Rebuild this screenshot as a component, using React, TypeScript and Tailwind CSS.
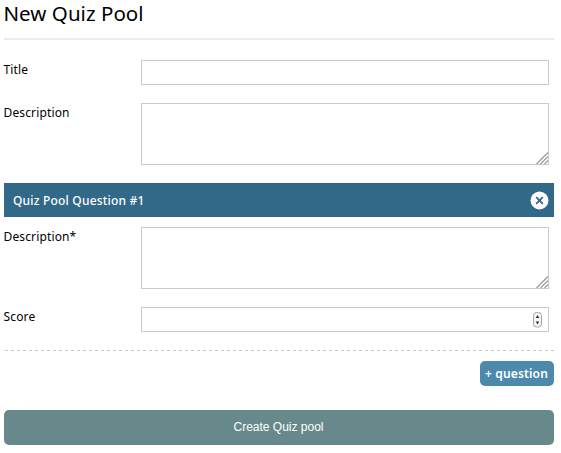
import type { ReactNode } from "react";

function ResizeGrip() {
  return (
    <svg className="pointer-events-none absolute right-px bottom-px" width="12" height="12" viewBox="0 0 12 12" fill="none" stroke="#a0a0a0" strokeWidth="1.4">
      <path d="M0.5 12 12 0.5M4.5 12 12 4.5M8.5 12 12 8.5" />
    </svg>
  );
}

function TextArea({ label }: { label: string }) {
  return (
    <div className="relative h-[62px] w-[408px]">
      <textarea aria-label={label} className="block h-full w-full resize-none border border-[#cacaca] bg-white outline-none" />
      <ResizeGrip />
    </div>
  );
}

function Stepper() {
  return (
    <svg className="absolute top-[5px] right-[7px]" width="9" height="16" viewBox="0 0 9 16">
      <rect x="0.5" y="0.5" width="8" height="14.5" rx="3" fill="#f6f6f6" stroke="#a5a5a5" />
      <path d="M4.5 3 6.3 6H2.7ZM4.5 12.5 6.3 9.5H2.7Z" fill="#333" />
    </svg>
  );
}

function Row({ label, className, children }: { label: ReactNode; className: string; children: ReactNode }) {
  return (
    <div className={`flex items-start ${className}`}>
      <div className="-ml-px w-[138px] shrink-0 pt-px pl-[0.5px] text-[12px] leading-[18px] tracking-[0.14px]">{label}</div>
      {children}
    </div>
  );
}

export default function App() {
  return (
    <main className="h-[453px] w-[561px] overflow-hidden bg-white pr-[7px] pl-1 font-['Noto_Sans',sans-serif] text-black">
      <h1 className="-ml-[0.5px] h-[38px] text-[20.5px] leading-[26px] font-[450] tracking-[0.04px]">New Quiz Pool</h1>
      <div className="h-[2px] bg-[#ebebeb]" />
      <form onSubmit={(e) => e.preventDefault()}>
        <Row label="Title" className="mt-5">
          <input aria-label="Title" className="block h-[25px] w-[408px] border border-[#cacaca] outline-none" />
        </Row>
        <Row label="Description" className="mt-[18px]">
          <TextArea label="Description" />
        </Row>
        <div className="mt-[18px] flex h-[34px] items-center justify-between bg-[#336988] pr-[5px] pl-[9px] text-white">
          <h2 className="pt-[2px] text-[12px] leading-[18px] font-medium tracking-[0.2px]">Quiz Pool Question #1</h2>
          <button type="button" aria-label="Remove question">
            <svg className="block" width="19" height="19" viewBox="0 0 19 19">
              <circle cx="9.5" cy="9.5" r="9" fill="white" />
              <path d="m6.2 6.2 6.6 6.6m0-6.6-6.6 6.6" stroke="#336988" strokeWidth="1.8" />
            </svg>
          </button>
        </div>
        <Row label="Description*" className="mt-[10px]">
          <TextArea label="Question description" />
        </Row>
        <Row label="Score" className="mt-[18px]">
          <div className="relative h-[25px] w-[408px]">
            <input aria-label="Score" className="block h-full w-full border border-[#cacaca] outline-none" />
            <Stepper />
          </div>
        </Row>
        <div className="mt-[18px] ml-px h-px bg-[repeating-linear-gradient(90deg,#cacaca_0_3px,transparent_3px_6px)]" />
        <div className="mt-[10px] flex justify-end">
          <button type="button" className="h-[25px] w-[74px] rounded-[5px] bg-[#4c89ac] pr-px text-[12px] leading-[25px] font-semibold tracking-[0.15px] whitespace-nowrap text-white">
            + question
          </button>
        </div>
        <button type="submit" className="mt-6 block h-[35px] w-full rounded-[5px] bg-[#68898c] pr-px font-['Liberation_Sans',Arial,sans-serif] text-[12px] leading-[33px] text-white">
          Create Quiz pool
        </button>
      </form>
    </main>
  );
}
